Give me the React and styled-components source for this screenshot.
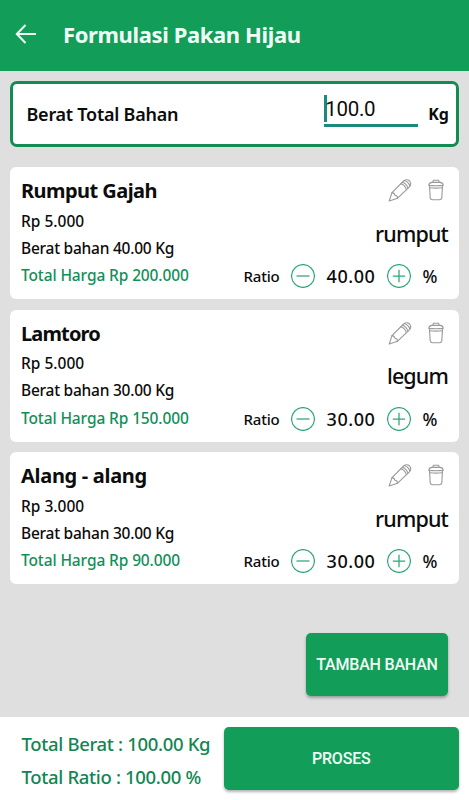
import React, { Component } from 'react';
import styled, { createGlobalStyle } from 'styled-components';

const GREEN = '#129e59';

const GlobalStyle = createGlobalStyle`
  * {
    box-sizing: border-box;
  }

  body {
    margin: 0;
    background: #dfdfdf;
    font-family: "Noto Sans", "Open Sans", sans-serif;
    color: #0c0c0c;
  }
`;

const Page = styled.div`
  display: flex;
  flex-direction: column;
  width: 469px;
  height: 800px;
  overflow: hidden;
  background: #dfdfdf;
`;

const Header = styled.header`
  display: flex;
  align-items: center;
  flex: none;
  height: 71px;
  padding: 0 0 3px 15px;
  background: ${GREEN};
`;

const BackIcon = styled.svg`
  width: 22px;
  height: 20px;
  margin-right: 26px;
  fill: none;
  stroke: #effff5;
  stroke-width: 2;
`;

/* single line of text, "track" is the letter spacing */
const Text = styled.span`
  display: block;
  white-space: nowrap;
  font-size: ${p => p.$size}px;
  font-weight: ${p => p.$weight || 500};
  line-height: ${p => p.$line}px;
  letter-spacing: ${p => p.$track || 0}px;
  color: ${p => p.$color || 'inherit'};
`;

const Content = styled.main`
  display: flex;
  flex-direction: column;
  flex: 1;
  padding: 10px 10px 0;
`;

const TotalBox = styled.section`
  display: flex;
  align-items: center;
  height: 66px;
  margin-bottom: 20px;
  padding: 0 7px 0 13.5px;
  border: 3px solid #118d52;
  border-radius: 7px;
  background: #fff;
`;

const WeightField = styled.div`
  display: flex;
  align-items: center;
  width: 94px;
  height: 33px;
  margin: -7px 10px 0 auto;
  padding-bottom: 1px;
  border-bottom: 3px solid #1b8a7c;
  font-family: Roboto, sans-serif;
`;

const Caret = styled.i`
  flex: none;
  width: 2.5px;
  height: 27px;
  margin: -1px -1.5px 0 0;
  background: #1b8a7c;
`;

const CardList = styled.div`
  display: flex;
  flex-direction: column;
  gap: 10.6px;
`;

const Card = styled.article`
  display: flex;
  justify-content: space-between;
  height: 132px;
  padding: 10px 11px 0;
  border-radius: 6px;
  background: #fff;
`;

const Info = styled.div`
  display: flex;
  flex-direction: column;
`;

const ItemName = styled(Text)`
  margin-bottom: 2.6px;
`;

const Side = styled.div`
  display: flex;
  flex-direction: column;
  align-items: flex-end;
`;

const Tools = styled.div`
  display: flex;
  gap: 16px;
  height: 41.5px;
  padding: 1px 4.5px 0 0;
`;

const ToolIcon = styled.svg`
  width: ${p => p.$width}px;
  height: 24px;
  fill: none;
  stroke: #9a9a9a;
  stroke-width: 1.1;
  stroke-linejoin: round;
  stroke-linecap: round;
`;

const RatioRow = styled.div`
  display: flex;
  align-items: center;
  width: 204.5px;
  height: 26px;
  margin-top: 14.5px;
`;

const RatioLabel = styled.div`
  width: 47.5px;
`;

const RatioValue = styled.div`
  display: flex;
  justify-content: center;
  width: 72px;
`;

const RoundButton = styled.button`
  width: 24px;
  height: 24px;
  padding: 0;
  border: 0;
  background: none;

  svg {
    display: block;
    fill: none;
    stroke: #2da678;
    stroke-width: 1.25;
  }
`;

const Percent = styled.div`
  margin-left: 11.5px;
`;

const Button = styled.button`
  display: flex;
  align-items: center;
  justify-content: center;
  flex: none;
  width: ${p => p.$width}px;
  height: 62.5px;
  padding: 2px 0 0;
  border: 0;
  border-radius: 5px;
  background: ${GREEN};
  color: #f0fff6;
  font-family: Roboto, sans-serif;
  box-shadow: 0 2px 3px rgba(0, 0, 0, 0.3);
`;

const AddRow = styled.div`
  display: flex;
  justify-content: flex-end;
  margin-top: auto;
  padding: 0 11px 21px 0;
`;

const Footer = styled.footer`
  display: flex;
  justify-content: space-between;
  flex: none;
  height: 83.5px;
  padding: 10.5px 10.5px 0 21.5px;
  background: #fff;
`;

const items = [
  { name: 'Rumput Gajah', price: '5.000', weight: '40.00', total: '200.000', kind: 'rumput', track: -0.55 },
  { name: 'Lamtoro', price: '5.000', weight: '30.00', total: '150.000', kind: 'legum', track: -0.85 },
  { name: 'Alang - alang', price: '3.000', weight: '30.00', total: '90.000', kind: 'rumput', track: -0.3 }
];

const PencilIcon = () => (
  <ToolIcon $width={24} viewBox="0 0 24 24">
    <path d="M1.2 23 L4 14.6 L15.6 3 Q18.8 0.4 21.6 3 Q24 5.8 21.4 8.8 L9.6 20.2 Z" />
    <path d="M4 14.6 Q6.6 14.8 6.9 17.3 Q9.4 17.5 9.6 20.2" />
    <path d="M12.8 5.8 Q17 7 18.4 11.6 M14.3 4.3 Q18.5 5.5 19.9 10.1 M16.4 2.5 Q20.6 3.9 21.9 8" />
  </ToolIcon>
);

const TrashIcon = () => (
  <ToolIcon $width={16} viewBox="0 0 16 24">
    <path d="M0.8 7.4 Q1 4.7 4 4.4 H12 Q15 4.7 15.2 7.4 Q8 8.2 0.8 7.4 Z" />
    <path d="M4.8 4.4 L5.4 2.2 H10.6 L11.2 4.4" />
    <path d="M1.5 8 L2.2 19.8 Q2.5 21.6 4.7 21.7 H11.3 Q13.5 21.6 13.8 19.8 L14.5 8" />
    <path d="M1.8 9.8 Q8 10.5 14.2 9.8" />
  </ToolIcon>
);

const StepButton = ({ plus }) => (
  <RoundButton>
    <svg width="24" height="24" viewBox="0 0 24 24">
      <circle cx="12" cy="12" r="11.4" />
      <path d={plus ? 'M5.8 12 H18.2 M12 5.8 V18.2' : 'M5.5 12 H18.5'} />
    </svg>
  </RoundButton>
);

const FeedCard = ({ item }) => (
  <Card>
    <Info>
      <ItemName $size={20} $weight={700} $line={28} $track={item.track}>{item.name}</ItemName>
      <Text $size={15.5} $line={27.3}>Rp {item.price}</Text>
      <Text $size={15.5} $line={27.3} $track={-0.25}>Berat bahan {item.weight} Kg</Text>
      <Text $size={15.5} $line={27.3} $track={-0.12} $color="#128f58">Total Harga Rp {item.total}</Text>
    </Info>
    <Side>
      <Tools>
        <PencilIcon />
        <TrashIcon />
      </Tools>
      <Text $size={21.5} $line={30} $track={-0.85}>{item.kind}</Text>
      <RatioRow>
        <RatioLabel><Text $size={15} $line={26} $track={-0.2}>Ratio</Text></RatioLabel>
        <StepButton />
        <RatioValue><Text $size={18} $line={26} $track={0.55}>{item.weight}</Text></RatioValue>
        <StepButton plus />
        <Percent><Text $size={17.5} $line={26}>%</Text></Percent>
      </RatioRow>
    </Side>
  </Card>
);

export default class App extends Component {

  render() {
    return (
      <Page>
        <GlobalStyle />
        <Header>
          <BackIcon viewBox="0 0 22 20">
            <path d="M21 10 H2 M10.5 1 L1.8 10 L10.5 19" />
          </BackIcon>
          <Text $size={22} $weight={700} $line={30} $track={-0.38} $color="#effff5">Formulasi Pakan Hijau</Text>
        </Header>
        <Content>
          <TotalBox>
            <Text $size={18} $weight={600} $line={26} $track={-0.25}>Berat Total Bahan</Text>
            <WeightField>
              <Caret />
              <Text $size={20.5} $weight={400} $line={26} $track={-0.3}>100.0</Text>
            </WeightField>
            <Text $size={16} $weight={700} $line={26}>Kg</Text>
          </TotalBox>
          <CardList>
            { items.map(item => (<FeedCard key={item.name} item={item} />)) }
          </CardList>
          <AddRow>
            <Button $width={142}><Text $size={16} $line={22} $track={-0.2}>TAMBAH BAHAN</Text></Button>
          </AddRow>
        </Content>
        <Footer>
          <div>
            <Text $size={18.5} $weight={500} $line={33} $track={-0.33} $color="#128553">Total Berat : 100.00 Kg</Text>
            <Text $size={18.5} $weight={500} $line={33} $track={-0.33} $color="#128553">Total Ratio : 100.00 %</Text>
          </div>
          <Button $width={234.5}><Text $size={16} $line={22} $track={-0.2}>PROSES</Text></Button>
        </Footer>
      </Page>
    );
  }
}
